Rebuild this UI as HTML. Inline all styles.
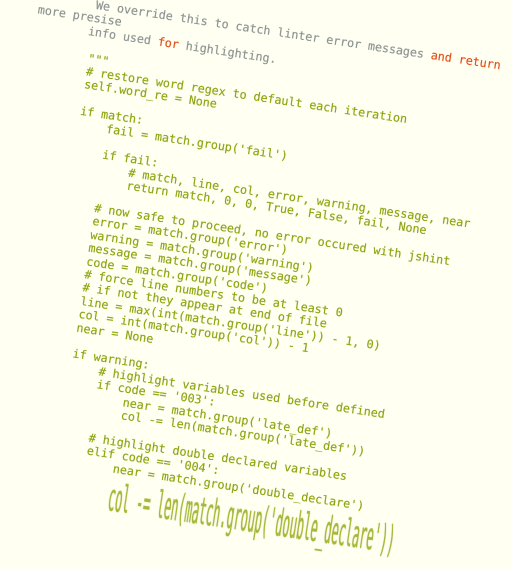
<!DOCTYPE html>
<html><head><meta charset="utf-8"><style>
html,body{margin:0;padding:0;width:512px;height:512px;overflow:hidden;background:#fffff2;}
#c{position:absolute;left:97px;top:-1px;transform:rotate(8.5deg);transform-origin:0 0;
font-family:"DejaVu Sans Mono","Liberation Mono",monospace;font-size:11.8px;letter-spacing:-0.05px;color:#93a515;text-shadow:0 0 0.5px rgba(140,160,10,0.8);}
.l{position:absolute;white-space:pre;height:13.4px;line-height:13.4px;}
.g{color:#8e9694;text-shadow:0 0 0.5px rgba(130,140,140,0.8);}
.r{color:#e2521c;text-shadow:0 0 0.5px rgba(226,82,28,0.8);}
</style></head><body>
<div id="c">
<div class="l g" style="top:0px;left:0">We override this to catch linter error messages <span class="r">and return</span></div>
<div class="l g" style="top:13.4px;left:-8ch">more presise</div>
<div class="l g" style="top:26.8px;left:-4px">info used <span class="r">for</span> highlighting.</div>
<div class="l" style="top:53.6px;left:0">"""</div>
<div class="l" style="top:67px;left:0"># restore word regex to default each iteration</div>
<div class="l" style="top:80.4px;left:0">self.word_re = None</div>
<div class="l" style="top:107.2px;left:0">if match:</div>
<div class="l" style="top:120.6px;left:4ch">fail = match.group('fail')</div>
<div class="l" style="top:147.4px;left:4ch">if fail:</div>
<div class="l" style="top:160.8px;left:8ch"># match, line, col, error, warning, message, near</div>
<div class="l" style="top:174.2px;left:8ch">return match, 0, 0, True, False, fail, None</div>
<div class="l" style="top:201px;left:4ch"># now safe to proceed, no error occured with jshint</div>
<div class="l" style="top:214.4px;left:4ch">error = match.group('error')</div>
<div class="l" style="top:227.8px;left:4ch">warning = match.group('warning')</div>
<div class="l" style="top:241.2px;left:4ch">message = match.group('message')</div>
<div class="l" style="top:254.6px;left:4ch">code = match.group('code')</div>
<div class="l" style="top:268px;left:4ch"># force line numbers to be at least 0</div>
<div class="l" style="top:281.4px;left:4ch"># if not they appear at end of file</div>
<div class="l" style="top:294.8px;left:4ch">line = max(int(match.group('line')) - 1, 0)</div>
<div class="l" style="top:308.2px;left:4ch">col = int(match.group('col')) - 1</div>
<div class="l" style="top:321.6px;left:4ch">near = None</div>
<div class="l" style="top:348.4px;left:4ch">if warning:</div>
<div class="l" style="top:361.8px;left:8ch"># highlight variables used before defined</div>
<div class="l" style="top:375.2px;left:8ch">if code == '003':</div>
<div class="l" style="top:388.6px;left:12ch">near = match.group('late_def')</div>
<div class="l" style="top:402px;left:12ch">col -= len(match.group('late_def'))</div>
<div class="l" style="top:428.8px;left:8ch"># highlight double declared variables</div>
<div class="l" style="top:442.2px;left:8ch">elif code == '004':</div>
<div class="l" style="top:455.6px;left:12ch">near = match.group('double_declare')</div>
<div class="l" style="top:472px;left:12ch;transform:scaleY(3.2);transform-origin:0 0;color:#a9b83a;">col -= len(match.group('double_declare'))</div>
</div>
</body></html>
